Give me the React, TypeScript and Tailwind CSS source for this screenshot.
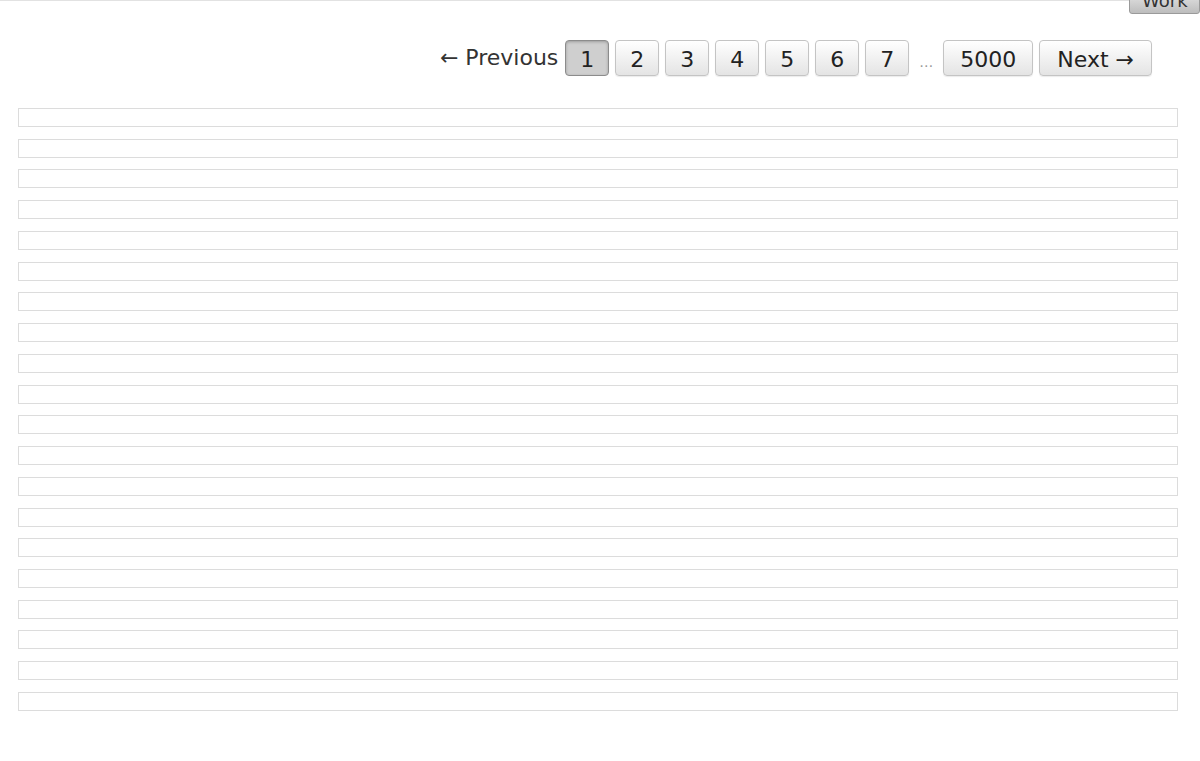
import React from 'react'

const pages = ['1', '2', '3', '4', '5', '6', '7']

const base =
  'h-[36px] rounded-[4px] border text-[22px] leading-none text-[#222] pt-[4px]'
const normal =
  'border-[#c4c4c4] bg-gradient-to-b from-[#ffffff] to-[#e4e4e4] shadow-[0_1px_1px_rgba(0,0,0,0.08)]'
const activeCls =
  'border-[#8c8c8c] bg-[#cfcfcf] shadow-[inset_0_1px_3px_rgba(0,0,0,0.25)]'

function PageButton({ label, active }: { label: string; active?: boolean }) {
  return (
    <button className={`${base} px-[14px] ${active ? activeCls : normal}`}>
      {label}
    </button>
  )
}

export default function App() {
  return (
    <div className="relative min-h-[761px] bg-white border-t border-[#e2e2e2] font-['DejaVu_Sans',sans-serif]">
      {/* cut-off toolbar button */}
      <div className="absolute right-0 -top-[14px] w-[71px] h-[27px] rounded-[3px] border border-[#9a9a9a] bg-gradient-to-b from-[#eeeeee] to-[#bdbdbd] text-[18px] leading-[26px] pl-[12px] text-[#333] overflow-hidden">
        Work
      </div>

      {/* Pagination */}
      <div className="flex justify-end items-center pt-[39px] pr-[48px] gap-[6px]">
        <span className="text-[22px] text-[#333] mr-[1px] -mt-[2px]">← Previous</span>
        {pages.map((p) => (
          <PageButton key={p} label={p} active={p === '1'} />
        ))}
        <span className="text-[14px] text-[#999] mx-[4px] pt-[8px]">…</span>
        <button className={`${base} px-[16px] ${normal}`}>5000</button>
        <button className={`${base} px-[17px] ${normal}`}>Next →</button>
      </div>

      {/* Rows */}
      <div className="flex flex-col gap-[11.74px] pl-[18px] pr-[22px] pt-[32px]">
        {Array.from({ length: 20 }).map((_, i) => (
          <div key={i} className="h-[19px] border border-[#dcdcdc] bg-white" />
        ))}
      </div>
    </div>
  )
}
